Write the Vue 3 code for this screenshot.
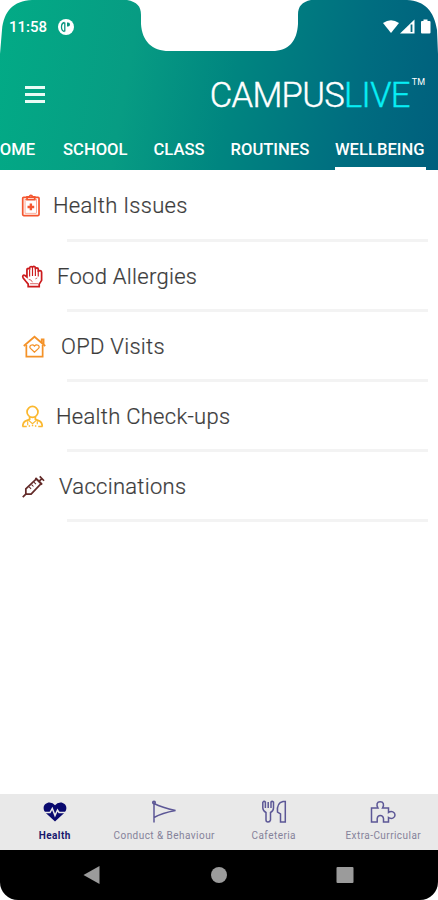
<template>
    <div class="phone">
        <header class="app-header">
            <svg class="screen-mask" viewBox="0 0 438 60" aria-hidden="true">
                <path d="M0 0H32C13 1 4 11 2 30L0 54Z" />
                <path d="M438 0H407C425 1 434 11 437 30L438 54Z" />
                <path d="M127 0C137 2 141 6 141 15V24C142 41 152 51 169 51H272C289 51 297 41 298 24V15C298 6 302 2 311 0Z" />
            </svg>
            <div class="status-bar">
                <span class="clock">11:58</span>
                <svg class="status-logo" viewBox="0 0 16 16">
                    <circle cx="8" cy="8" r="8" fill="#fff" />
                    <path d="M6.800 3.500V12.500M6.500 3.500Q3.500 4 3.500 8T6.500 12.500" stroke="#07957f" stroke-width="1.300" fill="none" />
                    <path d="M9 3.500h1a2 2 0 0 1 0 4H9z" fill="#07957f" />
                </svg>
                <svg class="status-icons" viewBox="0 0 48 16">
                    <path d="M0 4Q8-1.5 16 4L8 14Z" fill="#fff" />
                    <path d="M31.500 0.500V14.500H17Z" fill="#fff" />
                    <path d="M28.500 5.500V13" stroke="#00697f" stroke-width="1.800" />
                    <path d="M40.500 0.500h4v1.500h2q1 0 1 1v10.500q0 1-1 1h-7.500q-1 0-1-1V3q0-1 1-1h1.500z" fill="#fff" />
                </svg>
            </div>
            <div class="brand-row">
                <button class="menu-button" aria-label="Menu">
                    <span v-for="n in 3" :key="n"></span>
                </button>
                <div class="brand">
                    <span class="campus">CAMPUS</span><span class="live">LIVE</span><span class="tm">TM</span>
                </div>
            </div>
            <nav class="tabs">
                <span v-for="tab in tabs" :key="tab.name" class="tab" :class="[tab.name, { active: tab.name === activeTab }]">
                    {{ tab.label }}
                </span>
            </nav>
        </header>

        <main class="wellbeing-list">
            <div v-for="item in items" :key="item.icon" class="list-row" :class="item.icon">
                <svg v-if="item.icon === 'issues'" class="row-icon" viewBox="0 0 24 24">
                    <rect x="1.800" y="3.500" width="17" height="19" rx="1" />
                    <rect x="4.200" y="6" width="12.200" height="14" stroke-width="0.500" />
                    <path d="M6.300 3h2.500a1.500 1.500 0 0 1 3 0h2.500v3h-8z" />
                    <path d="M10.300 10v7M6.800 13.500h7" stroke-width="2.500" />
                </svg>
                <svg v-else-if="item.icon === 'allergies'" class="row-icon" viewBox="0 0 24 24">
                    <path d="M7.500 20L5 17 2.300 13.500C1 11.500 2.500 10 4.200 11L6.200 12.500V5C6.200 3 9 3 9 5V3.500C9 1 12 1 12 3V2.800C12 .8 15 .8 15 3V4.500C15 2.500 18 2.500 18 4.500V7C18.500 5.500 21.500 5.500 21.500 7.500V16L19 20V22.500H7.500Z" />
                    <path d="M9 5V12M12 3V11.500M15 4V11.500M18 6V12" stroke-width="1.200" />
                    <path d="M8 15Q11 15 12 18M9.500 19.500H18M15 14.500L17 13.500" stroke-width="0.700" />
                </svg>
                <svg v-else-if="item.icon === 'opd'" class="row-icon" viewBox="0 0 24 24">
                    <path d="M3.500 10.500V22.500H20.500V10.500" />
                    <path d="M.8 11.500L12 1.800 23.200 11.500M19.500 8V4.500H21.500V9.500" />
                    <path d="M12 18L7.800 14C5.500 11.300 9.800 8.800 12 11.500C14.200 8.800 18.500 11.300 16.200 14Z" stroke-width="1.300" />
                </svg>
                <svg v-else-if="item.icon === 'checkups'" class="row-icon" viewBox="0 0 24 24">
                    <circle cx="12" cy="7.200" r="5.700" />
                    <path d="M9 12.500V15L4.500 16.800Q2 18 1.800 22.500M15 12.500V15L19.500 16.800Q22 18 22.200 22.500" />
                    <path d="M8 16L12 19.500 16 16M7 17V21M17 17V20" stroke-width="1.200" />
                    <path d="M1.500 22.500h4.500M8 22h1.500M11.300 21.500h1.500M14.500 22H16M18 22.500H22.500" stroke-width="1.600" />
                </svg>
                <svg v-else class="row-icon" viewBox="0 0 24 24">
                    <path d="M4 20V14.500L15 4L20 9L9.500 20Z" />
                    <path d="M.8 23.200L4.500 19.500M18 6.500L21 3.500M18.500 1.500L23 6M14 3L21 10" />
                    <path d="M7.500 12.500L9.500 14.500M10 10L12 12M12.500 7.500L14.500 9.500" stroke-width="1.100" />
                </svg>
                <span class="row-label">{{ item.label }}</span>
            </div>
        </main>

        <footer class="bottom-nav">
            <div class="nav-item health">
                <svg viewBox="0 0 24 22">
                    <path d="M12 20.500L2.800 12C-2 6.500 2 1.500 6.500 1.500Q10 1.500 12 4.200Q14 1.500 17.500 1.500C22 1.500 26 6.500 21.200 12Z" fill="#09096e" />
                    <path d="M1 11.500H7L9.300 7.500 12 14.500 14.500 9 16 11.500H23" fill="none" stroke="#e9e9e9" stroke-width="1.500" />
                </svg>
                <span>Health</span>
            </div>
            <div class="nav-item conduct">
                <svg viewBox="0 0 26 24">
                    <path d="M3 2V22.500M3 3.500Q11 7.500 24.500 10.500Q11 13 3 17.500" />
                    <circle cx="3" cy="2.500" r="1.300" />
                </svg>
                <span>Conduct &amp; Behaviour</span>
            </div>
            <div class="nav-item cafeteria">
                <svg viewBox="0 0 26 24">
                    <path d="M1.800 2V8Q2 11 5 12.500V20Q5 22 7 22T9.500 20V12.500Q12.500 11 12.500 8V2Q11 .800 10 2V8M1.800 2Q3.200 .800 4.400 2V8M7.200 8V2" />
                    <path d="M24.300 1.500V22H19.500V14L16.500 12Q15.500 3 22 1.500Z" />
                </svg>
                <span>Cafeteria</span>
            </div>
            <div class="nav-item extra">
                <svg viewBox="0 0 26 24">
                    <path d="M1.500 8H8C6 4.500 7 1.800 10.200 1.800S14.500 4.500 12.500 8H18.500V12.500C21.500 10.500 25 12 25 15S21.500 19.500 18.500 17.500V22H13.500V18.500Q13 15.500 10.300 15.500T7.200 18.500V22H1.500Z" />
                </svg>
                <span>Extra-Curricular</span>
            </div>
        </footer>

        <div class="system-nav">
            <svg viewBox="0 0 20 20"><path d="M1.500 10L17.500 1V19Z" /></svg>
            <svg viewBox="0 0 20 20"><circle cx="10" cy="10" r="8" /></svg>
            <svg viewBox="0 0 20 20"><rect x="1.500" y="2" width="17" height="16" rx="1" /></svg>
        </div>
    </div>
</template>

<script setup>
import { ref } from 'vue';

const activeTab = ref('wellbeing');

const tabs = [
    { name: 'home', label: 'HOME' },
    { name: 'school', label: 'SCHOOL' },
    { name: 'class', label: 'CLASS' },
    { name: 'routines', label: 'ROUTINES' },
    { name: 'wellbeing', label: 'WELLBEING' },
];

const items = [
    { icon: 'issues', label: 'Health Issues' },
    { icon: 'allergies', label: 'Food Allergies' },
    { icon: 'opd', label: 'OPD Visits' },
    { icon: 'checkups', label: 'Health Check-ups' },
    { icon: 'vaccinations', label: 'Vaccinations' },
];
</script>

<style>
body {
    margin: 0;
    background: #fff;
}
</style>

<style scoped>
.phone {
    width: 438px;
    height: 900px;
    display: flex;
    flex-direction: column;
    overflow: hidden;
    background: #fff;
    font-family: Roboto, sans-serif;
}

.app-header {
    position: relative;
    flex: none;
    height: 170px;
    box-sizing: border-box;
    display: flex;
    flex-direction: column;
    background: linear-gradient(100deg, #02ab86 0%, #079c83 30%, #008580 53%, #006d80 80%, #005f7d 100%);
    color: #fff;
}

.screen-mask {
    position: absolute;
    top: 0;
    left: 0;
    width: 438px;
    height: 60px;
    fill: #fff;
}

.status-bar {
    position: relative;
    display: flex;
    align-items: center;
    height: 54px;
    padding: 0 7px 0 9px;
}

.clock {
    width: 49px;
    font-size: 15px;
    font-weight: 500;
}

.status-logo {
    width: 16px;
    height: 16px;
}

.status-icons {
    width: 48px;
    height: 16px;
    margin-left: auto;
}

.brand-row {
    display: flex;
    align-items: center;
    justify-content: space-between;
    height: 80px;
    padding: 0 13px 0 25px;
}

.menu-button {
    display: flex;
    flex-direction: column;
    gap: 4px;
    width: 20px;
    padding: 0;
    border: 0;
    background: none;
}

.menu-button span {
    height: 3px;
    background: #e9fbf5;
}

.brand {
    display: flex;
    align-items: center;
    padding-top: 2px;
    font-size: 34.500px;
    line-height: 40px;
    font-weight: 300;
    letter-spacing: -0.650px;
    -webkit-text-stroke: 0.400px currentColor;
    white-space: nowrap;
}

.live {
    color: #08eef5;
}

.tm {
    align-self: flex-start;
    margin: 2px 0 0 2px;
    font-size: 9px;
    line-height: 10px;
    letter-spacing: 0;
    -webkit-text-stroke: 0;
    font-weight: 400;
}

.tabs {
    display: flex;
    height: 36px;
    margin-left: -12px;
    font-size: 16.600px;
    line-height: 31px;
    font-weight: 500;
}

.tab {
    box-sizing: border-box;
    flex: none;
    white-space: nowrap;
}

.tab.home {
    width: 75px;
}

.tab.school {
    width: 90.500px;
}

.tab.class {
    width: 77px;
}

.tab.routines {
    width: 104.500px;
}

.tab.wellbeing {
    width: 91px;
}

.tab.active {
    border-bottom: 3px solid #fff;
}

.wellbeing-list {
    flex: 1;
}

.list-row {
    display: flex;
    align-items: center;
    height: 70px;
    box-sizing: border-box;
    padding: 0 0 2px 21px;
    background: linear-gradient(#f3f3f3, #f3f3f3) 67px 100% / 361px 3px no-repeat;
}

.list-row:first-child {
    height: 72px;
}

.row-icon {
    flex: none;
    width: 23px;
    height: 23px;
    fill: none;
    stroke: currentColor;
    stroke-width: 1.800;
}

.row-label {
    padding-top: 2px;
    color: #3c3c3c;
    font-size: 22px;
    line-height: 28px;
    font-weight: 300;
    letter-spacing: 0.280px;
    -webkit-text-stroke: 0.200px currentColor;
    white-space: nowrap;
}

.issues {
    color: #f4562f;
}

.issues .row-label {
    margin-left: 9px;
}

.allergies {
    color: #cc1b1d;
}

.allergies .row-label {
    margin-left: 13px;
}

.opd {
    padding-left: 23px;
    color: #f49228;
}

.opd .row-label {
    margin-left: 15px;
}

.checkups {
    color: #fbb82f;
}

.checkups .row-label {
    margin-left: 12px;
}

.vaccinations {
    padding-left: 22px;
    color: #632b29;
}

.vaccinations .row-label {
    margin-left: 14px;
}

.bottom-nav {
    flex: none;
    display: grid;
    grid-template-columns: repeat(4, 109.500px);
    height: 55.500px;
    background: #e9e9e9;
    color: #85829a;
}

.nav-item {
    display: flex;
    flex-direction: column;
    align-items: center;
    padding-top: 6px;
    font-size: 10px;
    line-height: 12px;
    letter-spacing: 0.450px;
    white-space: nowrap;
}

.nav-item svg {
    width: 26px;
    height: 24px;
    margin-bottom: 6px;
    fill: none;
    stroke: #5c5796;
    stroke-width: 1.500;
}

.nav-item.health svg {
    width: 24px;
    height: 22px;
    margin: 1px 0 7px;
    stroke: none;
}

.health {
    color: #17176c;
    font-weight: 700;
}

.system-nav {
    flex: none;
    display: flex;
    align-items: center;
    justify-content: space-between;
    box-sizing: border-box;
    height: 50.500px;
    padding: 0 83px 0 82px;
    border-radius: 0 0 18px 18px;
    background: #000;
}

.system-nav svg {
    width: 20px;
    height: 20px;
    fill: #9b9b9b;
}
</style>
